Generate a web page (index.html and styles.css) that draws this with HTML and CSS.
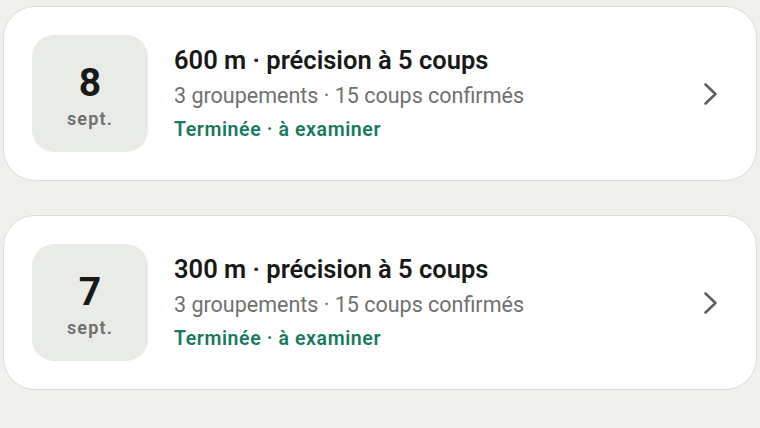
FILE: index.html
```html
<!DOCTYPE html>
<html lang="fr">
<head>
    <meta charset="UTF-8">
    <meta name="viewport" content="width=device-width, initial-scale=1.0">
    <title>Séances</title>
    <link rel="stylesheet" href="styles.css">
</head>
<body>

<div class="list">
    <div class="card">
        <div class="date">
            <span class="day">8</span>
            <span class="month">sept.</span>
        </div>
        <div class="info">
            <h3>600 m · précision à 5 coups</h3>
            <p class="meta">3 groupements · 15 coups confirmés</p>
            <p class="status">Terminée · à examiner</p>
        </div>
        <svg class="chevron" width="16" height="24" viewBox="0 0 16 24">
            <polyline points="2.5,2.5 12.5,12 2.5,21.5" fill="none" stroke="#5f615e" stroke-width="2.6" stroke-linecap="round" stroke-linejoin="round"/>
        </svg>
    </div>

    <div class="card">
        <div class="date">
            <span class="day">7</span>
            <span class="month">sept.</span>
        </div>
        <div class="info">
            <h3>300 m · précision à 5 coups</h3>
            <p class="meta">3 groupements · 15 coups confirmés</p>
            <p class="status">Terminée · à examiner</p>
        </div>
        <svg class="chevron" width="16" height="24" viewBox="0 0 16 24">
            <polyline points="2.5,2.5 12.5,12 2.5,21.5" fill="none" stroke="#5f615e" stroke-width="2.6" stroke-linecap="round" stroke-linejoin="round"/>
        </svg>
    </div>
</div>

</body>
</html>
```

FILE: styles.css
```css
body {
    margin: 0;
    font-family: Roboto, "Noto Sans", sans-serif;
    background-color: #f0f1ed;
    color: #1b1d1a;
}
.list {
    display: flex;
    flex-direction: column;
    gap: 34px;
    padding: 6px 3px;
}
.card {
    display: flex;
    align-items: center;
    background-color: #fff;
    border: 1px solid #dcdedb;
    border-radius: 32px;
    padding: 28px 37px 28px 28px;
}
.date {
    width: 116px;
    height: 117px;
    box-sizing: border-box;
    padding-top: 5px;
    flex-shrink: 0;
    display: flex;
    flex-direction: column;
    align-items: center;
    justify-content: center;
    background-color: #e9ebe7;
    border-radius: 22px;
}
.day {
    font-size: 39px;
    font-weight: 700;
    line-height: 40px;
    color: #181a17;
}
.month {
    font-size: 18px;
    font-weight: 600;
    letter-spacing: 1.2px;
    line-height: 22px;
    color: #6d6f6c;
    margin-top: 5px;
}
.info {
    flex: 1;
    margin-left: 26px;
}
.info h3 {
    margin: 0;
    font-size: 25.5px;
    font-weight: 600;
    line-height: 32px;
    color: #181a17;
}
.info .meta {
    margin: 6px 0 0;
    font-size: 21.5px;
    line-height: 28px;
    color: #6f716e;
}
.info .status {
    margin: 7px 0 0;
    font-size: 19.5px;
    font-weight: 600;
    letter-spacing: 0.6px;
    line-height: 26px;
    color: #177a5f;
}
.chevron {
    flex-shrink: 0;
}
```
